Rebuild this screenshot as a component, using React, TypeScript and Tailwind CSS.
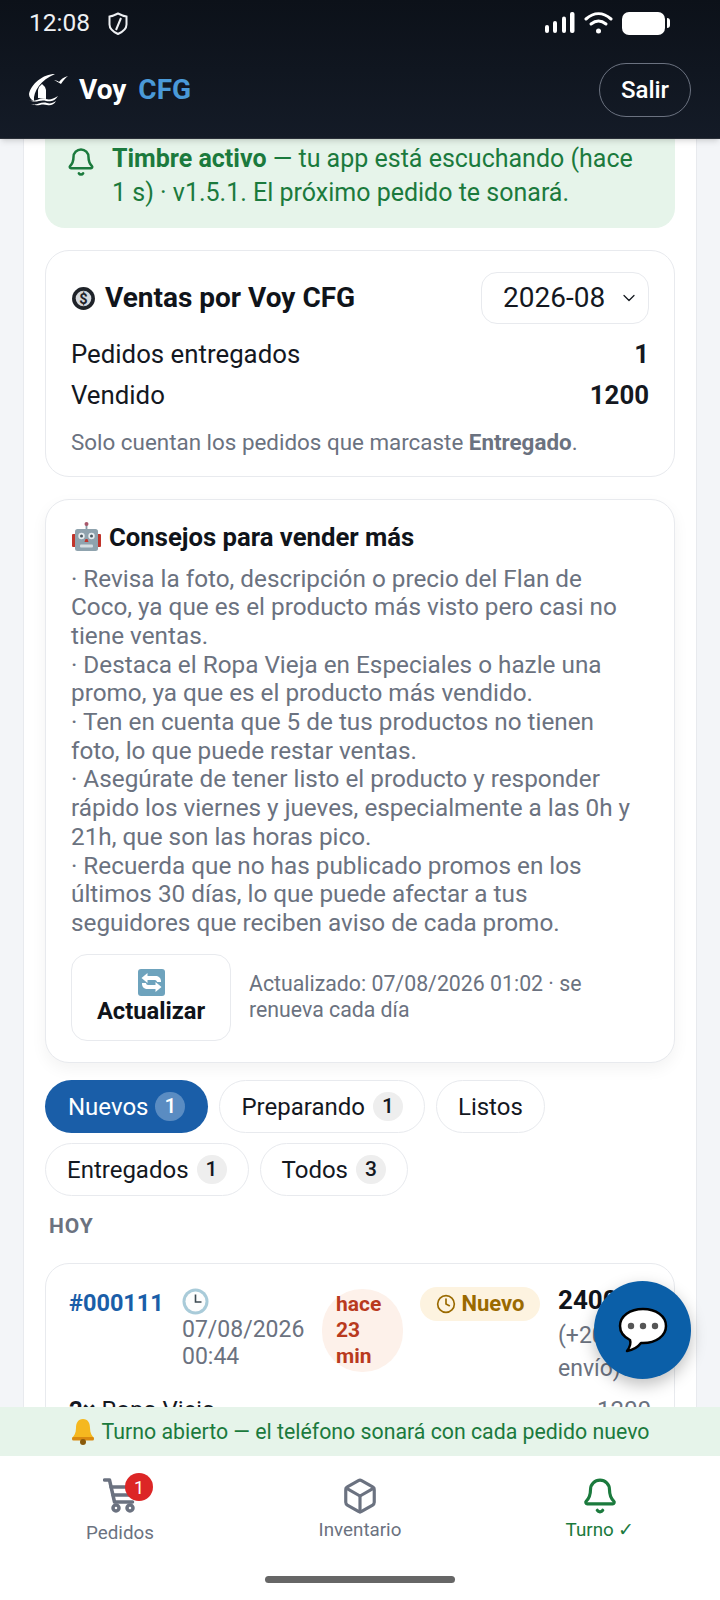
import { Bell, Box, ChevronDown, Clock } from "lucide-react";

const tips = [
  "· Revisa la foto, descripción o precio del Flan de Coco, ya que es el producto más visto pero casi no tiene ventas.",
  "· Destaca el Ropa Vieja en Especiales o hazle una promo, ya que es el producto más vendido.",
  "· Ten en cuenta que 5 de tus productos no tienen foto, lo que puede restar ventas.",
  "· Asegúrate de tener listo el producto y responder rápido los viernes y jueves, especialmente a las 0h y 21h, que son las horas pico.",
  "· Recuerda que no has publicado promos en los últimos 30 días, lo que puede afectar a tus seguidores que reciben aviso de cada promo.",
];

function Logo() {
  return (
    <svg width="40" height="36" viewBox="7 12 40 36" fill="none">
      <path d="M34 14C22 14 10 24 8 34c0 3 2 6 5 7-1-10 7-21 21-27z" fill="#fff" />
      <path d="M17 38v-8l1-3 3-3 3 3 1 3v9z" fill="#fff" />
      <path d="M33 20c2 0 4 1 5 2 2-3 5-5 9-6-3 2-5 5-7 8-3-2-5-3-7-4z" fill="#fff" />
      <path d="M8 40c6 3 10-3 17-1 4 1 7 0 12-3-3 5-8 6-12 5-6-2-10 3-17-1z" fill="#fff" />
      <path d="M10 44c6 2 10-3 16-1 3 1 6 0 9-2-2 4-6 5-9 4-6-2-9 2-16-1z" fill="#fff" />
    </svg>
  );
}

function StatusBar() {
  return (
    <div className="flex h-[42px] items-center justify-between pl-[29px] pr-[50px] pt-1">
      <div className="flex items-center gap-[18px]">
        <span className="text-[24.5px] text-[#eef0f3]">12:08</span>
        <svg width="20" height="23" viewBox="0 0 20 23" fill="none" stroke="#eef0f3" strokeWidth="2">
          <path d="M10 1.5c3 1.5 5 2.5 8.5 3v8c0 4-3 7-8.5 9.5-5.5-2.5-8.5-5.500-8.5-9.5v-8c3.5-.5 5.5-1.5 8.5-3z" />
          <path d="M13 6l-5 12" />
        </svg>
      </div>
      <div className="flex items-center gap-[9px]">
        <svg width="30" height="22" viewBox="0 0 30 22" fill="#fff">
          <rect x="0" y="13" width="4" height="8" rx="2" />
          <rect x="8" y="9" width="4" height="12" rx="2" />
          <rect x="17" y="4.5" width="4" height="16.5" rx="2" />
          <rect x="25" y="0" width="4.5" height="21" rx="2" />
        </svg>
        <svg width="29" height="24" viewBox="0 0 29 24" fill="none" stroke="#fff" strokeWidth="3" strokeLinecap="round">
          <path d="M2 8c8-7 17-7 25 0" />
          <path d="M7 13c5-4 10-4 15 0" />
          <circle cx="14.5" cy="20" r="2.5" fill="#fff" stroke="none" />
        </svg>
        <div className="flex items-center gap-[2px]">
          <div className="h-[23px] w-[43px] rounded-[7px] bg-white" />
          <div className="h-[10px] w-[3px] rounded-r bg-white" />
        </div>
      </div>
    </div>
  );
}

function Robot() {
  return (
    <svg width="29" height="30" viewBox="0 0 29 30" className="ml-[1px]">
      <rect x="13.6" y="1" width="1.8" height="7" fill="#8a9ba6" />
      <circle cx="14.5" cy="2" r="2" fill="#a8576a" />
      <rect x="0" y="12" width="4" height="13" rx="1" fill="#c0342b" />
      <rect x="25" y="12" width="4" height="13" rx="1" fill="#c0342b" />
      <rect x="3" y="7" width="23" height="22" rx="2.5" fill="#8fa3ae" />
      <circle cx="9.5" cy="14" r="3.2" fill="#e6edf0" />
      <circle cx="19.5" cy="14" r="3.2" fill="#e6edf0" />
      <circle cx="9.5" cy="14" r="1.5" fill="#4b5a63" />
      <circle cx="19.5" cy="14" r="1.5" fill="#4b5a63" />
      <path d="M13.5 17h2l1 3h-4z" fill="#c0342b" />
      <rect x="8" y="22.5" width="13" height="3" rx="1" fill="#d5dee2" />
    </svg>
  );
}

function Refresh() {
  return (
    <svg width="27" height="27" viewBox="0 0 27 27" fill="none">
      <rect width="27" height="27" rx="3" fill="#6ea3bd" />
      <path d="M3.5 9l6-5v3h8c3 0 5.5 2 5.5 5v1h-4c0-1-1-2-2-2h-7.5v3z" fill="#fff" />
      <path d="M23.5 18l-6 5v-3h-8c-3 0-5.5-2-5.5-5v-1h4c0 1 1 2 2 2h7.5v-3z" fill="#fff" />
    </svg>
  );
}

function ClockEmoji() {
  return (
    <svg width="27" height="27" viewBox="0 0 27 27">
      <circle cx="13.5" cy="13.5" r="13" fill="#a9cbd9" />
      <circle cx="13.5" cy="13.5" r="10" fill="#fdfdfd" />
      <path d="M13.5 6.5v7.5h6" fill="none" stroke="#3d4a52" strokeWidth="1.6" />
    </svg>
  );
}

function BellEmoji() {
  return (
    <svg width="24" height="27" viewBox="0 0 24 27">
      <path d="M12 1c5 0 7 4 7 9 0 5 2 8 4 10H1c2-2 4-5 4-10 0-5 2-9 7-9z" fill="#f5b81f" />
      <rect x="1" y="19" width="22" height="3.5" rx="1.5" fill="#d98a10" />
      <circle cx="12" cy="24" r="3" fill="#8a5a0a" />
    </svg>
  );
}

function Cart() {
  return (
    <svg width="34" height="36" viewBox="0 0 34 36" fill="none" stroke="#6b7280" strokeWidth="3.5" strokeLinecap="round" strokeLinejoin="round">
      <path d="M1.5 3h5l5 22h18" />
      <path d="M8 10h24" />
      <path d="M10 18h20" />
      <circle cx="13" cy="31" r="3" />
      <circle cx="27" cy="31" r="3" />
    </svg>
  );
}

function Tab({ label, count, active }: { label: string; count?: number; active?: boolean }) {
  return (
    <div
      className={
        active
          ? "flex h-[53px] items-center gap-[7px] rounded-full bg-[#1a5ea8] px-[23px] text-[24px] text-white"
          : "flex h-[53px] items-center gap-[8px] rounded-full border border-[#e8eaee] bg-white px-[21px] text-[24px] text-[#14181f]"
      }
    >
      <span>{label}</span>
      {count !== undefined && (
        <span
          className={
            active
              ? "flex h-[29px] w-[30px] items-center justify-center rounded-full bg-[#5a8cc2] text-[21px] font-medium"
              : "flex h-[29px] w-[30px] items-center justify-center rounded-full bg-[#eeeeee] text-[21px] font-medium"
          }
        >
          {count}
        </span>
      )}
    </div>
  );
}

export default function App() {
  return (
    <div className="relative flex h-[1600px] w-[720px] flex-col overflow-hidden bg-[#f3f5f8] font-['Roboto',sans-serif]">
      <header className="relative z-10 h-[139px] shrink-0 border-b border-[#2a2f38] bg-gradient-to-b from-[#0c1119] to-[#141b27] shadow-md">
        <StatusBar />
        <div className="mt-[21px] flex h-[54px] items-center justify-between pl-[28px] pr-[29px]">
          <div className="flex items-center gap-[11px]">
            <Logo />
            <div className="text-[28px] font-bold text-white">
              Voy <span className="ml-[5px] text-[#4a9ad8]">CFG</span>
            </div>
          </div>
          <div className="flex h-[54px] w-[92px] items-center justify-center rounded-full border border-[#6b7280] text-[24px] font-medium text-white">
            Salir
          </div>
        </div>
      </header>

      <main className="mx-[23px] min-h-0 flex-1 overflow-hidden border-x border-[#e8eaee] bg-white px-[21px]">
        <div className="flex h-[89px] gap-[16px] rounded-b-[20px] bg-[#e6f4ea] pl-[21px] pr-[26px] text-[25px] leading-[34px] text-[#1b7a3d]">
          <Bell size={30} strokeWidth={2} className="mt-[8px] shrink-0" />
          <p className="pt-[3px]">
            <b className="font-bold">Timbre activo</b> — tu app está escuchando (hace 1 s) · v1.5.1. El próximo pedido te sonará.
          </p>
        </div>

        <section className="mt-[22px] h-[227px] rounded-[24px] border border-[#e8eaee] bg-white px-[25px] pt-[21px]">
          <div className="flex items-center justify-between">
            <h2 className="flex items-center gap-[9px] text-[28px] font-bold text-[#10141a]">
              <svg width="25" height="25" viewBox="0 0 24 24">
                <circle cx="12" cy="12" r="11" fill="#1f2329" />
                <circle cx="12" cy="12" r="7.5" fill="#d6dadf" />
                <text x="12" y="17" textAnchor="middle" fontSize="14" fontWeight="700" fill="#1f2329">$</text>
              </svg>
              Ventas por Voy CFG
            </h2>
            <div className="flex h-[52px] w-[168px] items-center justify-between rounded-[16px] border border-[#e8eaee] pl-[21px] pr-[9px] text-[28px] text-[#14181f]">
              2026-08
              <ChevronDown size={20} strokeWidth={1.5} />
            </div>
          </div>
          <div className="mt-[10px] flex h-[41px] items-center justify-between text-[25.8px] text-[#14181f]">
            <span>Pedidos entregados</span>
            <b>1</b>
          </div>
          <div className="flex h-[41px] items-center justify-between text-[25.8px] text-[#14181f]">
            <span>Vendido</span>
            <b>1200</b>
          </div>
          <p className="mt-[10px] text-[22.4px] text-[#6b7280]">
            Solo cuentan los pedidos que marcaste <b>Entregado</b>.
          </p>
        </section>

        <section className="mt-[22px] h-[564px] rounded-[24px] border border-[#e8eaee] bg-white px-[25px] pt-[18px] shadow-[0_6px_16px_rgba(0,0,0,0.05)]">
          <h2 className="flex items-center gap-[8px] text-[25.7px] font-bold text-[#10141a]">
            <Robot />
            Consejos para vender más
          </h2>
          <div className="mt-[8px] pr-[4px] text-[24.3px] leading-[28.7px] text-[#6b7280]">
            {tips.map((t) => (
              <div key={t}>{t}</div>
            ))}
          </div>
          <div className="mt-[16px] flex items-center gap-[18px]">
            <div className="flex h-[87px] w-[160px] shrink-0 flex-col items-center justify-center rounded-[16px] border border-[#e8eaee] text-[23.7px] font-bold leading-[30px] text-[#10141a]">
              <Refresh />
              Actualizar
            </div>
            <p className="text-[21.3px] leading-[26px] text-[#6b7280]">
              Actualizado: 07/08/2026 01:02 · se renueva cada día
            </p>
          </div>
        </section>

        <div className="mt-[17px] flex flex-wrap gap-x-[11px] gap-y-[10px]">
          <Tab label="Nuevos" count={1} active />
          <Tab label="Preparando" count={1} />
          <Tab label="Listos" />
          <Tab label="Entregados" count={1} />
          <Tab label="Todos" count={3} />
        </div>

        <div className="mt-[15px] pl-[4px] text-[21px] font-bold tracking-[1px] text-[#6b7280]">HOY</div>

        <section className="mt-[20px] h-[300px] rounded-t-[24px] border border-[#e8eaee] px-[23px] pt-[20px]">
          <div className="flex items-start text-[23px]">
            <div className="w-[113px] shrink-0 text-[23.5px] font-bold leading-[38px] text-[#1a5ea8]">#000111</div>
            <div className="mt-[4px] w-[140px] shrink-0 leading-[27px] text-[#6b7280]">
              <ClockEmoji />
              <div className="mt-[1px]">07/08/2026</div>
              <div>00:44</div>
            </div>
            <div className="mt-[5px] flex h-[83px] w-[81px] shrink-0 flex-col justify-center rounded-[40px] bg-[#fdf1ea] pl-[14px] text-[21px] font-bold leading-[26px] text-[#b93a1e]">
              <span>hace</span>
              <span>23</span>
              <span>min</span>
            </div>
            <div className="ml-[17px] mt-[3px] flex h-[34px] w-[120px] shrink-0 items-center justify-center gap-[6px] rounded-full bg-[#fdf3e0] text-[22px] font-bold text-[#9a6a00]">
              <Clock size={20} strokeWidth={2} />
              Nuevo
            </div>
            <div className="ml-[18px] mt-[1px] shrink-0 leading-[33px] text-[#6b7280]">
              <div className="mb-[3px] text-[26px] font-bold leading-[31px] text-[#10141a]">2400</div>
              <div>(+200</div>
              <div>envío)</div>
            </div>
          </div>
          <div className="mt-[12px] flex justify-between text-[24px] leading-[26px] text-[#14181f]">
            <span>
              <b>2×</b> Ropa Vieja
            </span>
            <span className="text-[#6b7280]">1200</span>
          </div>
        </section>
      </main>

      <div className="relative z-10 flex h-[49px] shrink-0 items-center justify-center gap-[7px] bg-[#e6f4ea] text-[21.3px] text-[#1b7a3d]">
        <BellEmoji />
        Turno abierto — el teléfono sonará con cada pedido nuevo
      </div>

      <nav className="relative z-10 h-[144px] shrink-0 bg-white">
        <div className="grid grid-cols-3 pt-[21px] text-[18.8px]">
          <div className="flex flex-col items-center text-[#6b7280]">
            <div className="relative">
              <Cart />
              <span className="absolute -right-[16px] -top-[4px] flex h-[28px] w-[28px] items-center justify-center rounded-full bg-[#dc2626] text-[18px] text-white">1</span>
            </div>
            <span className="mt-[6px]">Pedidos</span>
          </div>
          <div className="flex flex-col items-center text-[#6b7280]">
            <Box size={38} strokeWidth={2} />
            <span className="mt-[1px]">Inventario</span>
          </div>
          <div className="flex flex-col items-center text-[#1b7a3d]">
            <Bell size={38} strokeWidth={2} />
            <span className="mt-[1px]">Turno ✓</span>
          </div>
        </div>
        <div className="absolute bottom-[17px] left-[265px] h-[7px] w-[190px] rounded-full bg-[#666]" />
      </nav>

      <div className="absolute left-[594px] top-[1281px] z-20 flex h-[98px] w-[97px] items-center justify-center rounded-full bg-[#0b5fa8] shadow-[0_6px_16px_rgba(0,0,0,0.25)]">
        <svg width="50" height="46" viewBox="0 0 50 46">
          <path d="M25 2C12 2 2 9 2 19c0 6 4 11 10 14 1 3 0 7-3 11 6-1 11-4 14-8h2c13 0 23-7 23-17S38 2 25 2z" fill="#fff" stroke="#000" strokeWidth="2.5" strokeLinejoin="round" />
          <circle cx="13" cy="19" r="3.2" fill="#555" />
          <circle cx="25" cy="19" r="3.2" fill="#555" />
          <circle cx="37" cy="19" r="3.2" fill="#555" />
        </svg>
      </div>
    </div>
  );
}
